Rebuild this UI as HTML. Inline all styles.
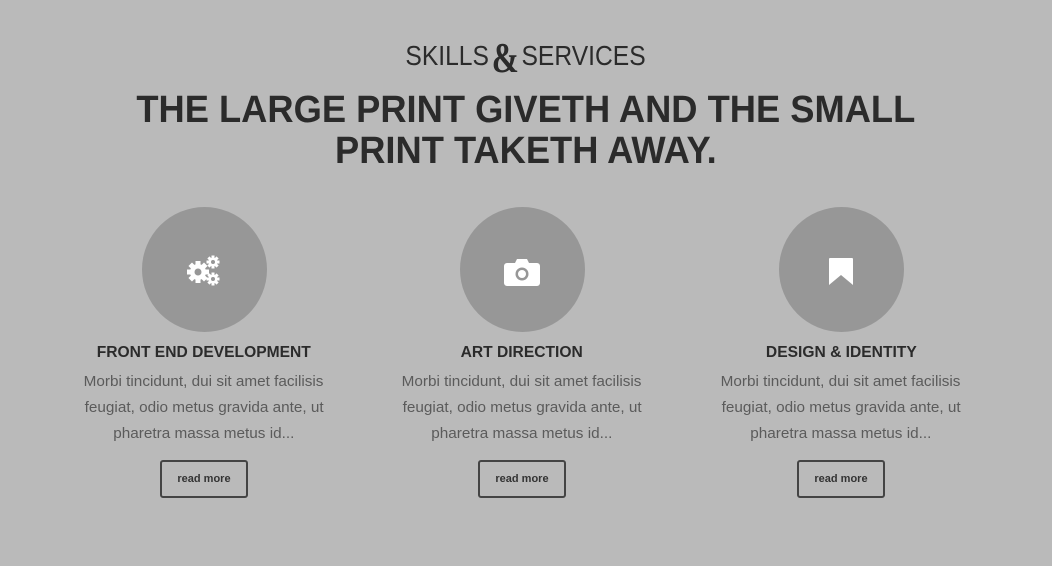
<!DOCTYPE html>
<html><head><meta charset="utf-8"><style>
body{margin:0;width:1052px;height:566px;background:#bababa;font-family:"Liberation Sans",sans-serif;color:#2b2b2b;overflow:hidden;position:relative}
.sk{position:absolute;top:35px;left:0;width:1052px;text-align:center;font-size:28px}
.sk span{display:inline-block;transform:scaleX(0.88)}
.amp{font-family:"Liberation Serif",serif;font-weight:bold;font-size:42px;vertical-align:-7px;margin:0 1px}
.h{position:absolute;top:90px;left:0;width:1052px;text-align:center;font-weight:bold;font-size:38px;line-height:41px}
.h div{display:inline-block;transform:scaleX(0.955);white-space:nowrap}
.col{position:absolute;top:207px;width:300px;text-align:center}
.c{width:125px;height:125px;border-radius:50%;background:#979797;margin:0 auto;position:relative}
.c svg{position:absolute;left:50%;top:50%;transform:translate(-50%,-50%)}
.t{font-weight:bold;font-size:16px;margin-top:10px;height:22px;line-height:22px}
.t span{display:inline-block;transform:scaleX(0.975)}
.p{font-size:15px;line-height:26px;color:#5b5b5b;margin-top:5px}
.p span{display:inline-block;transform:scaleX(1.02);white-space:nowrap}
.b{width:84px;height:34px;border:2px solid #444;border-radius:3px;margin:13px auto 0;font-size:11px;font-weight:bold;line-height:34px;color:#333}
</style></head><body>
<div class="sk"><span>SKILLS<span class="amp">&amp;</span>SERVICES</span></div>
<div class="h"><div>THE LARGE PRINT GIVETH AND THE SMALL</div><br><div>PRINT TAKETH AWAY.</div></div>

<div class="col" style="left:54px">
<div class="c"><svg width="40" height="36" viewBox="0 0 40 36">
<g fill="#fff">
<circle cx="14" cy="20" r="8"/>
<g transform="translate(14 20)"><rect x="-2.5" y="-11" width="5" height="22"/><rect x="-11" y="-2.5" width="22" height="5"/><rect x="-2.5" y="-11" width="5" height="22" transform="rotate(45)"/><rect x="-2.5" y="-11" width="5" height="22" transform="rotate(-45)"/></g>
<g transform="translate(29 10)"><circle r="4.5"/><rect x="-1.5" y="-6.5" width="3" height="13"/><rect x="-6.5" y="-1.5" width="13" height="3"/><rect x="-1.5" y="-6.5" width="3" height="13" transform="rotate(45)"/><rect x="-1.5" y="-6.5" width="3" height="13" transform="rotate(-45)"/></g>
<g transform="translate(29 27)"><circle r="4.5"/><rect x="-1.5" y="-6.5" width="3" height="13"/><rect x="-6.5" y="-1.5" width="13" height="3"/><rect x="-1.5" y="-6.5" width="3" height="13" transform="rotate(45)"/><rect x="-1.5" y="-6.5" width="3" height="13" transform="rotate(-45)"/></g>
</g>
<g fill="#979797"><circle cx="14" cy="20" r="3.5"/><circle cx="29" cy="10" r="2"/><circle cx="29" cy="27" r="2"/></g>
</svg></div>
<div class="t"><span>FRONT END DEVELOPMENT</span></div>
<div class="p"><span>Morbi tincidunt, dui sit amet facilisis</span><br><span>feugiat, odio metus gravida ante, ut</span><br><span>pharetra massa metus id...</span></div>
<div class="b">read more</div>
</div>

<div class="col" style="left:372px">
<div class="c"><svg width="36" height="30" viewBox="0 0 36 30" style="margin-top:2px">
<path fill="#fff" d="M3 6h8l2-4h10l2 4h8a3 3 0 0 1 3 3v17a3 3 0 0 1-3 3H3a3 3 0 0 1-3-3V9a3 3 0 0 1 3-3z"/>
<circle cx="18" cy="17" r="6.5" fill="#979797"/><circle cx="18" cy="17" r="4" fill="#fff"/>
</svg></div>
<div class="t"><span>ART DIRECTION</span></div>
<div class="p"><span>Morbi tincidunt, dui sit amet facilisis</span><br><span>feugiat, odio metus gravida ante, ut</span><br><span>pharetra massa metus id...</span></div>
<div class="b">read more</div>
</div>

<div class="col" style="left:691px">
<div class="c"><svg width="24" height="28" viewBox="0 0 24 28" style="margin-top:2px">
<path fill="#fff" d="M1 0h22a1 1 0 0 1 1 1v26l-12-10L0 27V1a1 1 0 0 1 1-1z"/>
</svg></div>
<div class="t"><span>DESIGN &amp; IDENTITY</span></div>
<div class="p"><span>Morbi tincidunt, dui sit amet facilisis</span><br><span>feugiat, odio metus gravida ante, ut</span><br><span>pharetra massa metus id...</span></div>
<div class="b">read more</div>
</div>
</body></html>
